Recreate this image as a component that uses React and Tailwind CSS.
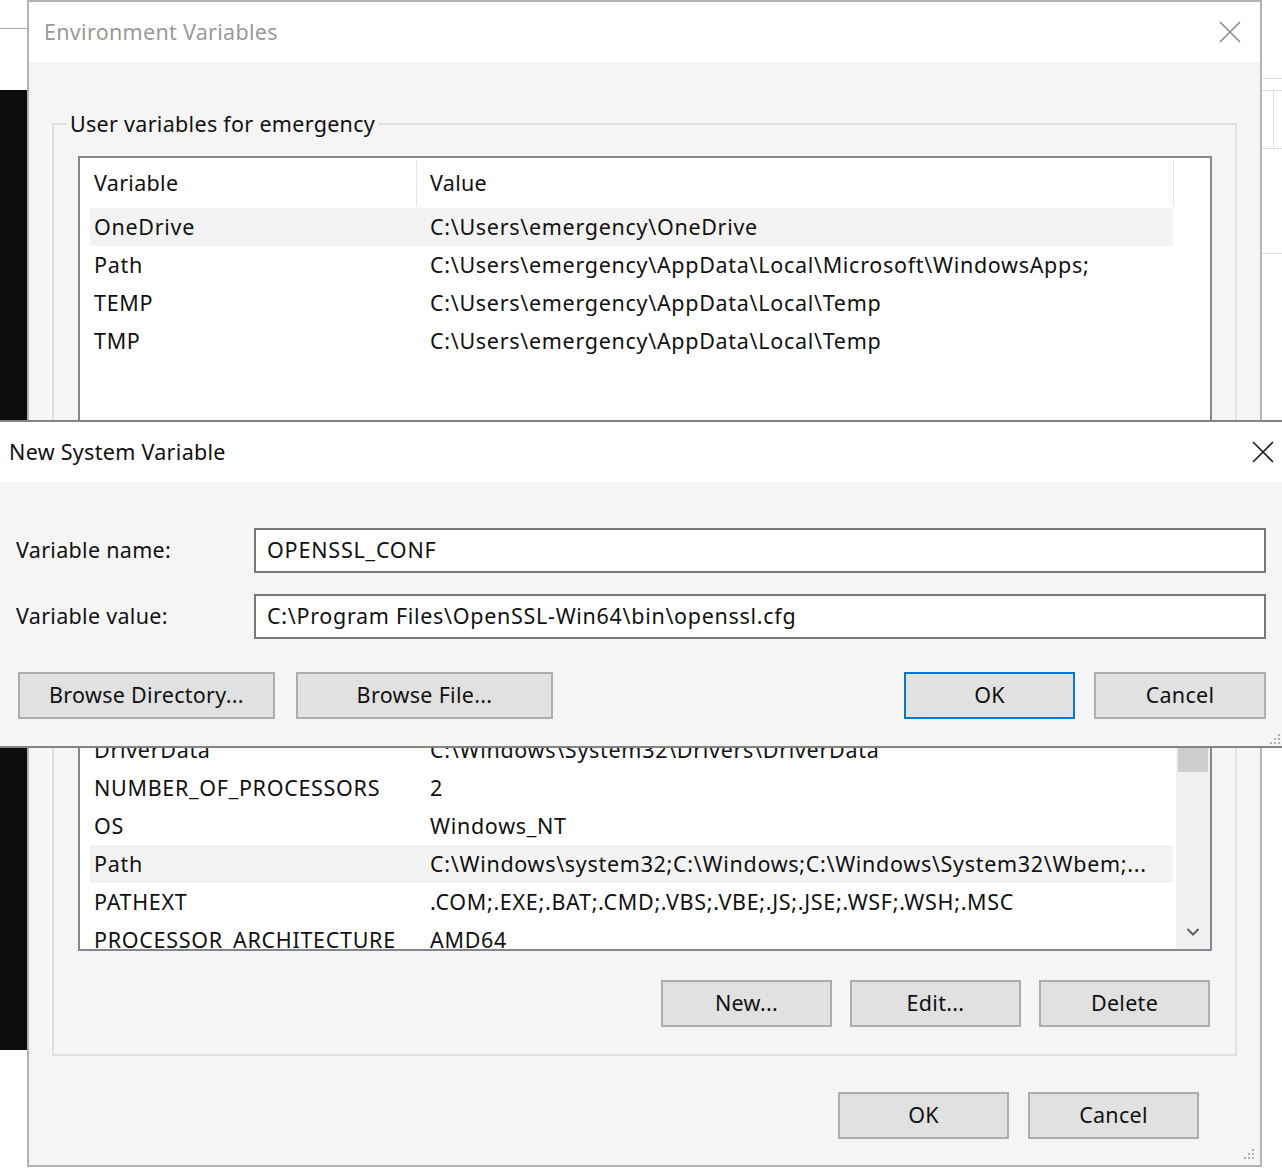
import React from 'react';

const userVars = [
  ['OneDrive', 'C:\\Users\\emergency\\OneDrive'],
  ['Path', 'C:\\Users\\emergency\\AppData\\Local\\Microsoft\\WindowsApps;'],
  ['TEMP', 'C:\\Users\\emergency\\AppData\\Local\\Temp'],
  ['TMP', 'C:\\Users\\emergency\\AppData\\Local\\Temp'],
];

const systemVars = [
  ['ComSpec', 'C:\\Windows\\system32\\cmd.exe'],
  ['DriverData', 'C:\\Windows\\System32\\Drivers\\DriverData'],
  ['NUMBER_OF_PROCESSORS', '2'],
  ['OS', 'Windows_NT'],
  ['Path', 'C:\\Windows\\system32;C:\\Windows;C:\\Windows\\System32\\Wbem;...'],
  ['PATHEXT', '.COM;.EXE;.BAT;.CMD;.VBS;.VBE;.JS;.JSE;.WSF;.WSH;.MSC'],
  ['PROCESSOR_ARCHITECTURE', 'AMD64'],
];

const CloseIcon = ({ color }) => (
  <svg width="22" height="22" viewBox="0 0 22 22">
    <path d="M1 1 L21 21 M21 1 L1 21" stroke={color} strokeWidth="1.6" fill="none" />
  </svg>
);

const Grip = () => (
  <svg width="10" height="10" viewBox="0 0 10 10">
    <rect x="8" y="0" width="2" height="2" fill="#b0b0b0" />
    <rect x="4" y="4" width="2" height="2" fill="#b0b0b0" />
    <rect x="8" y="4" width="2" height="2" fill="#b0b0b0" />
    <rect x="0" y="8" width="2" height="2" fill="#b0b0b0" />
    <rect x="4" y="8" width="2" height="2" fill="#b0b0b0" />
    <rect x="8" y="8" width="2" height="2" fill="#b0b0b0" />
  </svg>
);

const Button = ({ children, primary, className = '' }) => (
  <button
    className={`h-[47px] bg-[#e1e1e1] border-2 text-[21.5px] tracking-[0.3px] text-[#111] ${primary ? 'border-[#0078d7]' : 'border-[#adadad]'} ${className}`}
  >
    {children}
  </button>
);

const Header = () => (
  <div className="flex h-[50px] shrink-0">
    <div className="w-[336px] pl-[14px] flex items-center">Variable</div>
    <div className="w-px bg-[#e5e5e5] my-[2px]" />
    <div className="w-[756px] pl-[13px] flex items-center">Value</div>
    <div className="w-px bg-[#e5e5e5] my-[2px]" />
  </div>
);

const Row = ({ name, value, active }) => (
  <div className={`flex h-[38px] shrink-0 items-center ml-[10px] w-[1083px] whitespace-nowrap tracking-[0.7px] ${active ? 'bg-[#f3f3f3]' : ''}`}>
    <div className="w-[326px] pl-[4px]">{name}</div>
    <div className="pl-[14px]">{value}</div>
  </div>
);

const GroupBox = ({ label, children, className = '' }) => (
  <fieldset className={`border-2 border-[#e0e0e0] mx-[23px] pl-[24px] pr-[23px] pt-[19px] ${className}`}>
    <legend className="-ml-[11px] px-[3px] leading-[26px]">{label}</legend>
    {children}
  </fieldset>
);

export default function App() {
  return (
    <div className="relative w-[1282px] h-[1168px] overflow-hidden bg-white font-['Noto_Sans',sans-serif] text-[21.5px] tracking-[0.3px] text-[#111]">
      {/* desktop behind the windows */}
      <div className="absolute left-0 top-[28px] w-[27px] h-px bg-[#a8a8a8]" />
      <div className="absolute left-0 top-[90px] w-[27px] h-[960px] bg-[#0a0d0a]" />
      <div className="absolute left-[1261px] top-[78px] w-[21px] h-px bg-[#dcdcdc]" />
      <div className="absolute left-[1261px] top-[90px] w-[21px] h-px bg-[#dcdcdc]" />
      <div className="absolute left-[1273px] top-[90px] w-px h-[58px] bg-[#dcdcdc]" />
      <div className="absolute left-[1261px] top-[148px] w-[21px] h-px bg-[#dcdcdc]" />
      <div className="absolute left-[1261px] top-[253px] w-[21px] h-px bg-[#dcdcdc]" />

      {/* Environment Variables window */}
      <div className="absolute left-[27px] top-0 w-[1235px] h-[1167px] border-2 border-[#b4b4b4] bg-[#f5f5f5] flex flex-col">
        <div className="h-[60px] shrink-0 bg-white flex items-center justify-between pl-[15px] pr-[19px]">
          <span className="text-[#9a9a9a]">Environment Variables</span>
          <CloseIcon color="#8a8a8a" />
        </div>

        <div className="flex flex-col pt-[49px]">
          <GroupBox label="User variables for emergency" className="pb-[28px]">
            <div className="h-[294px] border-2 border-[#838790] bg-white flex flex-col">
              <Header />
              {userVars.map(([n, v], i) => (
                <Row key={n} name={n} value={v} active={i === 0} />
              ))}
            </div>
            <div className="flex justify-end gap-[18px] mt-[30px] pr-[2px]">
              <Button className="w-[171px]">New...</Button>
              <Button className="w-[171px]">Edit...</Button>
              <Button className="w-[171px]">Delete</Button>
            </div>
          </GroupBox>

          <GroupBox label="System variables" className="mt-[39px] pb-[27px]">
            <div className="h-[310px] border-2 border-[#838790] bg-white flex">
              <div className="flex-1 flex flex-col overflow-hidden">
                <Header />
                {systemVars.map(([n, v]) => (
                  <Row key={n} name={n} value={v} active={n === 'Path'} />
                ))}
              </div>
              <div className="w-[34px] bg-[#f0f0f0] flex flex-col items-center">
                <div className="h-[34px]" />
                <div className="w-[30px] h-[72px] mt-[23px] bg-[#cdcdcd]" />
                <div className="flex-1" />
                <div className="h-[34px] flex items-center justify-center">
                  <svg width="14" height="10" viewBox="0 0 14 10">
                    <path d="M1.5 2 L7 7.5 L12.5 2" stroke="#606060" strokeWidth="2" fill="none" />
                  </svg>
                </div>
              </div>
            </div>
            <div className="flex justify-end gap-[18px] mt-[29px] pr-[2px]">
              <Button className="w-[171px]">New...</Button>
              <Button className="w-[171px]">Edit...</Button>
              <Button className="w-[171px]">Delete</Button>
            </div>
          </GroupBox>

          <div className="flex justify-end gap-[19px] mt-[36px] pr-[61px]">
            <Button className="w-[171px]">OK</Button>
            <Button className="w-[171px]">Cancel</Button>
          </div>
        </div>
        <div className="absolute right-[6px] bottom-[6px]">
          <Grip />
        </div>
      </div>

      {/* New System Variable dialog */}
      <div className="absolute -left-[2px] top-[420px] w-[1286px] h-[328px] border-2 border-[#858585] bg-[#f5f5f5] flex flex-col">
        <div className="h-[60px] shrink-0 bg-white flex items-center justify-between pl-[9px] pr-[8px]">
          <span className="text-[#111]">New System Variable</span>
          <CloseIcon color="#222" />
        </div>

        <div className="flex flex-col pt-[46px] pl-[16px] pr-[16px]">
          <div className="flex items-center">
            <span className="w-[238px] shrink-0">Variable name:</span>
            <div className="flex-1 h-[45px] border-2 border-[#7a7a7a] bg-white flex items-center pl-[11px] tracking-[0.8px]">
              OPENSSL_CONF
            </div>
          </div>
          <div className="flex items-center mt-[21px]">
            <span className="w-[238px] shrink-0">Variable value:</span>
            <div className="flex-1 h-[45px] border-2 border-[#7a7a7a] bg-white flex items-center pl-[11px] tracking-[0.7px]">
              C:\Program Files\OpenSSL-Win64\bin\openssl.cfg
            </div>
          </div>
          <div className="flex items-center mt-[33px] pl-[2px]">
            <Button className="w-[257px]">Browse Directory...</Button>
            <Button className="w-[257px] ml-[21px]">Browse File...</Button>
            <Button primary className="w-[171px] ml-auto">OK</Button>
            <Button className="w-[172px] ml-[19px]">Cancel</Button>
          </div>
        </div>
        <div className="absolute right-[2px] bottom-[2px]">
          <Grip />
        </div>
      </div>
    </div>
  );
}
